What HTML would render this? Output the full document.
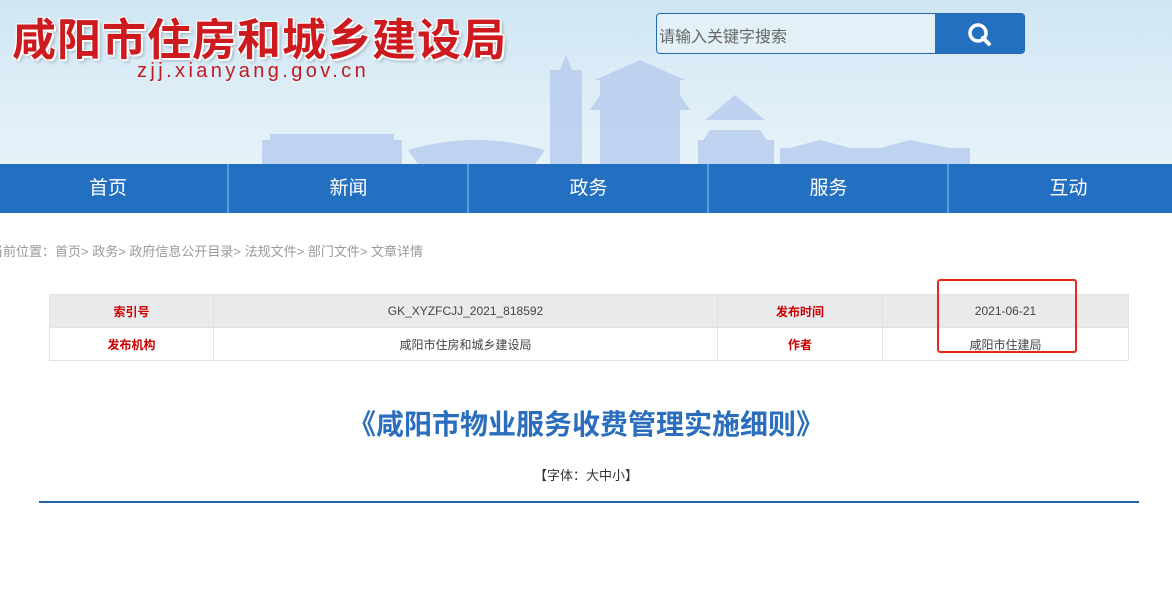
<!DOCTYPE html>
<html><head><meta charset="utf-8"><style>
*{margin:0;padding:0;box-sizing:border-box}
body{width:1172px;height:611px;overflow:hidden;background:#fff;font-family:"Liberation Sans","Noto Sans CJK SC",sans-serif;position:relative}
.hd{position:absolute;left:0;top:0;width:1172px;height:164px;background:linear-gradient(180deg,#cfe6f3 0%,#deeef7 60%,#e6f2f8 100%)}
.logo{position:absolute;left:12px;top:4px;font-size:44px;font-weight:bold;color:#cc1a1f;letter-spacing:1px;text-shadow:2px 2px 0 #fff,-1px -1px 0 #fff,1px -1px 0 #fff,-1px 1px 0 #fff,3px 3px 3px rgba(0,0,0,.25);white-space:nowrap}
.url{position:absolute;left:137px;top:60px;font-size:20px;color:#c01a20;letter-spacing:3.4px}
.sb{position:absolute;left:656px;top:13px;width:369px;height:41px;border:1px solid #2467b0;border-radius:4px;background:#e3f0f8;overflow:hidden}
.sb span{position:absolute;left:2px;top:9px;font-size:16px;color:#666}
.sb .btn{position:absolute;right:0;top:0;width:89px;height:41px;background:#2470c0}
.nav{position:absolute;left:0;top:164px;width:1172px;height:49px;background:#2370c2}
.nav div{position:absolute;top:0;text-align:center;color:#fff;font-size:19px;line-height:49px}
.nav i{position:absolute;top:0;width:2px;height:49px;background:#5b9ad6}
.crumb{position:absolute;left:-10px;top:241px;font-size:13px;color:#999}
table{position:absolute;left:49px;top:294px;width:1080px;border-collapse:collapse;font-size:12px}
td{border:1px solid #e2e2e2;height:33px;text-align:center;color:#444}
tr:first-child td{background:#e9eaec}
td.k{color:#c00;font-weight:bold}
.red{position:absolute;left:937px;top:279px;width:140px;height:74px;border:2px solid #e8271f;border-radius:3px}
h1{position:absolute;left:0;top:403px;width:1172px;text-align:center;font-size:28px;color:#2a6ebd;font-weight:bold}
.fs{position:absolute;left:0;top:465px;width:1172px;text-align:center;font-size:13px;color:#333}
.ln{position:absolute;left:39px;top:501px;width:1100px;height:2px;background:#2363ad}
</style></head><body>
<div class="hd">
<svg width="1172" height="164" style="position:absolute;left:0;top:0" fill="#b9cdee" opacity=".85">
<rect x="262" y="140" width="140" height="24"/><rect x="270" y="134" width="124" height="8"/>
<path d="M408 150 Q475 130 545 150 L535 164 L418 164Z"/>
<rect x="550" y="70" width="32" height="94"/><path d="M560 70 L566 55 L572 70Z"/>
<path d="M595 80 L640 60 L685 80Z M590 110 L690 110 L680 95 L600 95Z"/><rect x="600" y="80" width="80" height="84"/>
<path d="M705 120 L735 95 L765 120Z M700 145 L770 145 L760 130 L710 130Z"/><rect x="698" y="140" width="76" height="24"/>
<rect x="780" y="148" width="190" height="16"/><path d="M790 148 L820 140 L850 148Z M880 148 L910 140 L950 148Z"/>
</svg>
<div class="logo">咸阳市住房和城乡建设局</div>
<div class="url">zjj.xianyang.gov.cn</div>
<div class="sb"><span>请输入关键字搜索</span><div class="btn"><svg width="89" height="41"><circle cx="43" cy="19" r="8" fill="none" stroke="#fff" stroke-width="3.5"/><path d="M48 24 L54 30" stroke="#fff" stroke-width="4" stroke-linecap="round"/></svg></div></div>
</div>
<div class="nav">
<div style="left:0;width:216px">首页</div><i style="left:227px"></i>
<div style="left:229px;width:239px">新闻</div><i style="left:467px"></i>
<div style="left:469px;width:239px">政务</div><i style="left:707px"></i>
<div style="left:709px;width:239px">服务</div><i style="left:947px"></i>
<div style="left:949px;width:239px">互动</div>
</div>
<div class="crumb">当前位置：首页&gt; 政务&gt; 政府信息公开目录&gt; 法规文件&gt; 部门文件&gt; 文章详情</div>
<table>
<tr><td class="k" style="width:164px">索引号</td><td style="width:504px">GK_XYZFCJJ_2021_818592</td><td class="k" style="width:165px">发布时间</td><td>2021-06-21</td></tr>
<tr><td class="k">发布机构</td><td>咸阳市住房和城乡建设局</td><td class="k">作者</td><td>咸阳市住建局</td></tr>
</table>
<div class="red"></div>
<h1>《咸阳市物业服务收费管理实施细则》</h1>
<div class="fs">【字体：大中小】</div>
<div class="ln"></div>
</body></html>
